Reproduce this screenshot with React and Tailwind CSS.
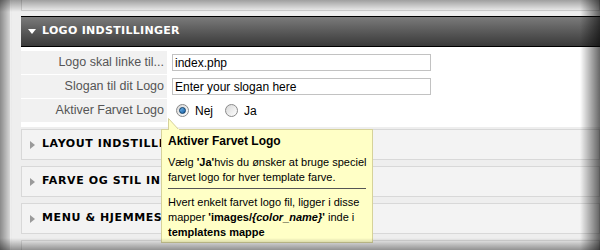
import React from 'react';

const sans = { fontFamily: '"Liberation Sans", Arial, sans-serif' };

const Radio = ({ checked }) => (
  <span className="inline-flex h-[13px] w-[13px] items-center justify-center rounded-full border border-[#8a8a8a] bg-gradient-to-br from-[#d8d8d8] to-[#ffffff]">
    {checked && (
      <span className="h-[7px] w-[7px] rounded-full border border-[#0c3c66] bg-gradient-to-br from-[#6fb6ee] to-[#135fa3]" />
    )}
  </span>
);

const Section = ({ title }) => (
  <div className="flex h-[31px] items-center border border-[#d8d8d8] bg-[#f3f3f3] pl-[8px]">
    <svg width="5" height="8" viewBox="0 0 5 8" className="mr-[7px]">
      <polygon points="0,0 5,4 0,8" fill="#9a9a9a" />
    </svg>
    <span className="text-[11px] font-bold text-black tracking-[0.6px] font-['DejaVu_Sans',sans-serif]">{title}</span>
  </div>
);

const Row = ({ label, children }) => (
  <div className="flex h-[23px]">
    <div className="flex w-[146px] items-center justify-end bg-[#f1f1f1] pr-[3px] text-[12.5px] text-[#555]">
      {label}
    </div>
    <div className="flex flex-1 items-center pl-[5px]">{children}</div>
  </div>
);

export default function App() {
  return (
    <div className="relative h-[250px] w-[600px] overflow-hidden bg-[#e6e6e6]" style={sans}>
      <div className="ml-[10px] h-full border-l border-[#fafafa] bg-[#eeeeee] pl-[10px]">
        <div className="h-[11px] border border-t-0 border-[#d2d2d2] bg-[#f4f4f4]" />
        <div className="mt-[5px] flex h-[31px] items-center border-y border-black bg-gradient-to-b from-[#7b7b7b] to-[#3a3a3a] pl-[7px]">
          <svg width="8" height="5" viewBox="0 0 8 5" className="mr-[6px]">
            <polygon points="0,0 8,0 4,5" fill="#ffffff" />
          </svg>
          <span className="text-[11px] font-bold tracking-[0.3px] text-white font-['DejaVu_Sans',sans-serif]">
            LOGO INDSTILLINGER
          </span>
        </div>
        <div className="flex flex-col gap-px bg-white pb-[5px] pt-[4px]">
          <Row label="Logo skal linke til...">
            <div className="flex h-[17px] w-[259px] items-center border border-[#c2c2c2] pl-[2px] text-[12px] text-black">
              index.php
            </div>
          </Row>
          <Row label="Slogan til dit Logo">
            <div className="flex h-[17px] w-[259px] items-center border border-[#c2c2c2] pl-[2px] text-[12px] text-black">
              Enter your slogan here
            </div>
          </Row>
          <Row label="Aktiver Farvet Logo">
            <div className="flex items-center pl-[4px] text-[12px] text-black">
              <Radio checked />
              <span className="ml-[6px] mr-[12px]">Nej</span>
              <Radio />
              <span className="ml-[6px]">Ja</span>
            </div>
          </Row>
        </div>
        <div className="mt-[2px] flex flex-col gap-[6px]">
          <Section title="LAYOUT INDSTILLINGER" />
          <Section title="FARVE OG STIL INDSTILLINGER" />
          <Section title="MENU & HJEMMESIDE INDSTILLINGER" />
          <Section title="ANDRE INDSTILLINGER" />
        </div>
      </div>

      {/* tooltip */}
      <div className="absolute left-[161px] top-[129px] w-[212px] h-[114px] border border-[#d6d29a] bg-[#ffffc6] px-[6px] pt-[4px] text-[11px] leading-[15px] text-black">
        <svg width="12" height="12" viewBox="0 0 12 12" className="absolute left-[6px] top-[-12px]">
          <polygon points="0.5,12 0.5,0.5 11,12" fill="#ffffc6" stroke="#d6d29a" />
          <rect x="1" y="11" width="10" height="2" fill="#ffffc6" />
        </svg>
        <div className="text-[12px] font-bold">Aktiver Farvet Logo</div>
        <div className="mt-[6px] whitespace-nowrap">
          Vælg <b>'Ja'</b>hvis du ønsker at bruge speciel
          <br />
          farvet logo for hver template farve.
        </div>
        <div className="mt-[3px] border-t border-[#555]" />
        <div className="mt-[6px] whitespace-nowrap">
          Hvert enkelt farvet logo fil, ligger i disse
          <br />
          mapper <b>'images/<i>{'{color_name}'}</i>'</b> inde i
          <br />
          <b>templatens mappe</b>
        </div>
      </div>

      {/* vignette */}
      <div className="pointer-events-none absolute inset-y-0 left-0 w-[12px] bg-gradient-to-r from-[rgba(0,0,0,0.4)] to-transparent" />
      <div className="pointer-events-none absolute inset-y-0 right-0 w-[20px] bg-gradient-to-l from-[rgba(0,0,0,0.6)] to-transparent" />
      <div className="pointer-events-none absolute inset-x-0 top-0 h-[12px] bg-gradient-to-b from-[rgba(0,0,0,0.35)] to-transparent" />
      <div className="pointer-events-none absolute inset-x-0 bottom-0 h-[12px] bg-gradient-to-t from-[rgba(0,0,0,0.4)] to-transparent" />
    </div>
  );
}
